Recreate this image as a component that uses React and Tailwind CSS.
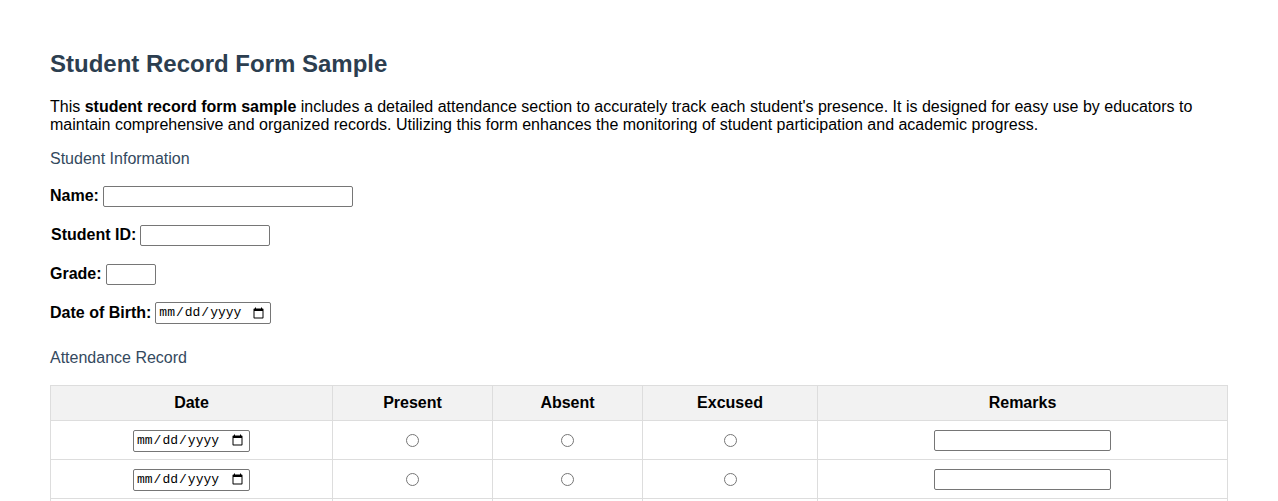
import React from "react";

const inputCls = "border border-[#767676] rounded-[2px] bg-white h-[21px] px-[2px] text-[13px] outline-none";
const dateCls = "border border-[#767676] rounded-[2px] bg-white h-[22px] pl-[2px] pr-[3px] text-[13px] font-['Liberation_Mono',monospace] outline-none";

function Field({ label, children }) {
  return (
    <div className="flex items-center h-[22px]">
      <label className="font-bold text-[16px] leading-[18px]">{label}</label>
      <span className="ml-[4px] flex items-center">{children}</span>
    </div>
  );
}

export default function App() {
  const rows = [0, 1, 2, 3, 4];
  return (
    <div className="px-[50px] pt-[50px] pb-[40px] font-['Liberation_Sans',Arial,sans-serif] text-black bg-white min-h-screen">
      <h1 className="text-[24px] font-bold text-[#2c3e50] leading-[28px]">Student Record Form Sample</h1>
      <p className="mt-[20px] text-[16px] leading-[18px]">
        This <strong>student record form sample</strong> includes a detailed attendance section to accurately track each student's presence. It is designed for easy use by educators to maintain comprehensive and organized records. Utilizing this form enhances the monitoring of student participation and academic progress.
      </p>
      <h3 className="mt-[16px] text-[16px] leading-[18px] text-[#34495e] font-normal">Student Information</h3>
      <div className="mt-[17px] flex flex-col gap-[17px]">
        <Field label="Name:"><input type="text" className={inputCls + " w-[250px]"} /></Field>
        <Field label={<span className="pl-[1px]">Student ID:</span>}><input type="text" className={inputCls + " w-[130px]"} /></Field>
        <Field label="Grade:"><input type="text" className={inputCls + " w-[50px]"} /></Field>
        <Field label="Date of Birth:"><input type="date" className={dateCls + " w-[116px]"} /></Field>
      </div>
      <h3 className="mt-[25px] text-[16px] leading-[18px] text-[#34495e] font-normal">Attendance Record</h3>
      <table className="mt-[18px] w-full border-collapse text-[16px]">
        <thead>
          <tr className="bg-[#f2f2f2] h-[35px]">
            <th className="border border-[#dddddd] w-[282px] font-bold">Date</th>
            <th className="border border-[#dddddd] w-[160px] font-bold">Present</th>
            <th className="border border-[#dddddd] w-[150px] font-bold">Absent</th>
            <th className="border border-[#dddddd] w-[175px] font-bold">Excused</th>
            <th className="border border-[#dddddd] font-bold">Remarks</th>
          </tr>
        </thead>
        <tbody>
          {rows.map((r) => (
            <tr key={r} className="h-[39px]">
              <td className="border border-[#dddddd] text-center align-middle">
                <input type="date" className={dateCls + " w-[117px] inline-block align-middle"} />
              </td>
              <td className="border border-[#dddddd] text-center align-middle">
                <input type="radio" name={"att" + r} className="align-middle m-0 w-[13px] h-[13px]" />
              </td>
              <td className="border border-[#dddddd] text-center align-middle">
                <input type="radio" name={"att" + r} className="align-middle m-0 w-[13px] h-[13px]" />
              </td>
              <td className="border border-[#dddddd] text-center align-middle">
                <input type="radio" name={"att" + r} className="align-middle m-0 w-[13px] h-[13px]" />
              </td>
              <td className="border border-[#dddddd] text-center align-middle">
                <input type="text" className={inputCls + " w-[177px] inline-block align-middle"} />
              </td>
            </tr>
          ))}
        </tbody>
      </table>
    </div>
  );
}
